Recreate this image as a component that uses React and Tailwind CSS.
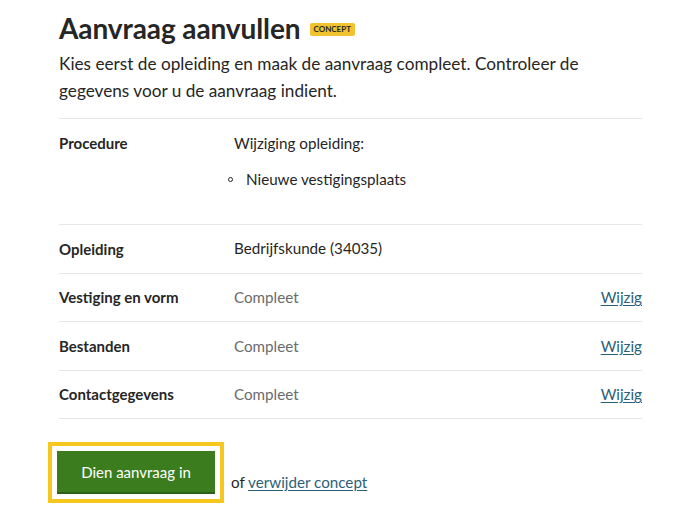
import React from "react";

const rows = [
  { label: "Opleiding", value: "Bedrijfskunde (34035)", muted: false, edit: false },
  { label: "Vestiging en vorm", value: "Compleet", muted: true, edit: true },
  { label: "Bestanden", value: "Compleet", muted: true, edit: true },
  { label: "Contactgegevens", value: "Compleet", muted: true, edit: true },
];

export default function App() {
  return (
    <div className="min-h-screen bg-white px-[59px] pt-[8px] text-[#262626] font-['Lato',sans-serif]">
      <div className="w-[583px]">
        <div className="flex items-center gap-[9px]">
          <h1 className="text-[28px] font-bold leading-[40px] tracking-[-0.1px]">Aanvraag aanvullen</h1>
          <span className="mt-[2px] rounded-[2px] bg-[#f2c230] px-[4px] py-[1px] text-[8px] font-bold leading-[11px] text-[#262626]">
            CONCEPT
          </span>
        </div>
        <p className="mt-[2px] text-[17.2px] leading-[27px]">
          Kies eerst de opleiding en maak de aanvraag compleet. Controleer de gegevens voor u de aanvraag indient.
        </p>

        <div className="mt-[14px] border-t border-[#e6e6e6]">
          {/* Procedure */}
          <div className="flex border-b border-[#e6e6e6] pt-[13px] pb-[34px]">
            <div className="w-[175px] text-[15px] font-bold leading-[22px]">Procedure</div>
            <div className="flex-1 text-[15.2px] leading-[22px]">
              <div>Wijziging opleiding:</div>
              <ul className="-ml-[6px] mt-[14px]">
                <li className="flex items-center gap-[13px]">
                  <span className="h-[5px] w-[5px] rounded-full border border-[#262626]"></span>
                  Nieuwe vestigingsplaats
                </li>
              </ul>
            </div>
          </div>

          {rows.map((r) => (
            <div key={r.label} className="flex h-[48.6px] items-center border-b border-[#e6e6e6]">
              <div className="w-[175px] text-[15px] font-bold">{r.label}</div>
              <div className={`flex-1 text-[15.2px] ${r.muted ? "text-[#6b6b6b]" : ""}`}>{r.value}</div>
              {r.edit && (
                <a href="#" className="text-[15.2px] text-[#2b6178] underline underline-offset-2">
                  Wijzig
                </a>
              )}
            </div>
          ))}
        </div>

        <div className="mt-[23px] flex items-end">
          <div className="-ml-[11px] border-[4px] border-[#f6c71e] p-[5px]">
            <button className="h-[43px] w-[158px] bg-[#3b7d1e] text-[15px] text-white border-b-[2px] border-[#2b5e16]">
              Dien aanvraag in
            </button>
          </div>
          <span className="mb-[10px] ml-[7px] text-[15.2px]">
            of{" "}
            <a href="#" className="text-[#2b6178] underline underline-offset-2">
              verwijder concept
            </a>
          </span>
        </div>
      </div>
    </div>
  );
}
